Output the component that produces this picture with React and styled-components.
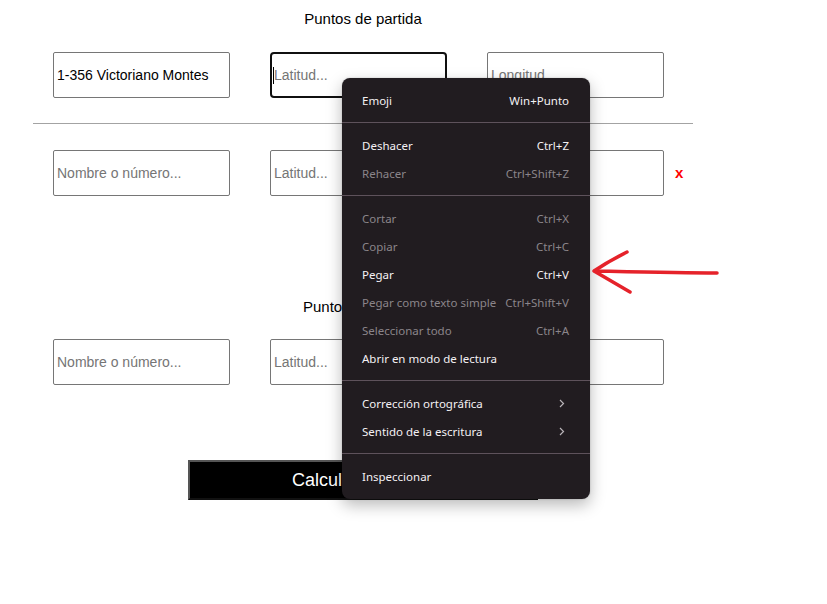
import React from "react";
import styled, { createGlobalStyle } from "styled-components";

const GlobalStyle = createGlobalStyle`
  html, body {
    margin: 0;
    padding: 0;
    background: #ffffff;
  }
  body {
    font-family: "Liberation Sans", Arial, sans-serif;
    color: #000;
  }
`;

const menuItems = [
  { label: "Emoji", shortcut: "Win+Punto" },
  { sep: true },
  { label: "Deshacer", shortcut: "Ctrl+Z" },
  { label: "Rehacer", shortcut: "Ctrl+Shift+Z", disabled: true },
  { sep: true },
  { label: "Cortar", shortcut: "Ctrl+X", disabled: true },
  { label: "Copiar", shortcut: "Ctrl+C", disabled: true },
  { label: "Pegar", shortcut: "Ctrl+V" },
  { label: "Pegar como texto simple", shortcut: "Ctrl+Shift+V", disabled: true },
  { label: "Seleccionar todo", shortcut: "Ctrl+A", disabled: true },
  { label: "Abrir en modo de lectura" },
  { sep: true },
  { label: "Corrección ortográfica", submenu: true },
  { label: "Sentido de la escritura", submenu: true },
  { sep: true },
  { label: "Inspeccionar" },
];

const App = () => {
  return (
    <Screen>
      <GlobalStyle />
      <Page>
        <Title>Puntos de partida</Title>
        <Row>
          <Field defaultValue="1-356 Victoriano Montes" placeholder="Nombre o número..." />
          <FieldWrap>
            <Field $focused placeholder="Latitud..." />
            <Caret />
          </FieldWrap>
          <Field placeholder="Longitud..." />
        </Row>
        <Divider />
        <Row $gap={26}>
          <Field placeholder="Nombre o número..." />
          <Field placeholder="Latitud..." />
          <Field placeholder="Longitud..." />
          <Remove>x</Remove>
        </Row>
        <Title $top={102}>Puntos de llegada</Title>
        <Row $gap={23}>
          <Field placeholder="Nombre o número..." />
          <Field placeholder="Latitud..." />
          <Field placeholder="Longitud..." />
        </Row>
        <Calculate>Calcular distancia</Calculate>
      </Page>

      <Menu>
        {menuItems.map((item, i) =>
          item.sep ? (
            <MenuSeparator key={i} />
          ) : (
            <MenuItem key={i} $disabled={item.disabled}>
              <span>{item.label}</span>
              {item.shortcut && <Shortcut>{item.shortcut}</Shortcut>}
              {item.submenu && (
                <svg width="6" height="9" viewBox="0 0 6 9">
                  <polyline
                    points="1,1 4.5,4.5 1,8"
                    fill="none"
                    stroke="#b9b4b8"
                    strokeWidth="1.2"
                  />
                </svg>
              )}
            </MenuItem>
          )
        )}
      </Menu>

      <Arrow width="140" height="60" viewBox="586 242 140 60">
        <path
          d="M595 271 C 640 272, 680 273, 717 273"
          fill="none"
          stroke="#e5222a"
          strokeWidth="3.5"
          strokeLinecap="round"
        />
        <path
          d="M627 252 C 615 258, 603 265, 594 271 C 606 278, 618 285, 630 292"
          fill="none"
          stroke="#e5222a"
          strokeWidth="3.5"
          strokeLinecap="round"
          strokeLinejoin="round"
        />
      </Arrow>
    </Screen>
  );
};

//Styled Components
const Screen = styled.div`
  position: relative;
  display: flow-root;
  width: 827px;
  min-height: 604px;
`;

const Page = styled.div`
  width: 660px;
  margin-left: 33px;
`;

const Title = styled.h3`
  margin: ${(p) => p.$top || 10}px 0 0;
  font-size: 15px;
  line-height: 18px;
  font-weight: normal;
  text-align: center;
`;

const Row = styled.div`
  display: flex;
  align-items: center;
  gap: 40px;
  padding-left: 20px;
  margin-top: ${(p) => p.$gap || 24}px;
  height: 46px;
`;

const FieldWrap = styled.div`
  position: relative;
  display: flex;
`;

const Field = styled.input`
  box-sizing: border-box;
  width: 177px;
  height: 46px;
  margin: 0;
  padding: 0 ${(p) => (p.$focused ? 2 : 3)}px;
  border: ${(p) => (p.$focused ? "2px solid #101010" : "1px solid #767676")};
  border-radius: ${(p) => (p.$focused ? 4 : 2)}px;
  font-family: "Liberation Sans", Arial, sans-serif;
  font-size: 14px;
  color: #000;
  background: #fff;
  outline: none;

  &::placeholder {
    color: #757575;
  }
`;

const Caret = styled.span`
  position: absolute;
  left: 3px;
  top: 15px;
  width: 1px;
  height: 17px;
  background: #000;
`;

const Divider = styled.div`
  margin-top: 25px;
  height: 1px;
  background: #a3a3a3;
`;

const Remove = styled.span`
  margin-left: -29px;
  margin-top: -2px;
  color: #ff0000;
  font-size: 15px;
  font-weight: bold;
  line-height: 1;
`;

const Calculate = styled.button`
  display: block;
  box-sizing: border-box;
  width: 350px;
  height: 40px;
  margin: 75px auto 0;
  padding: 0;
  background: #000;
  color: #fff;
  border-style: solid;
  border-width: 2px;
  border-color: #555 #111 #111 #555;
  font-family: "Liberation Sans", Arial, sans-serif;
  font-size: 18px;
`;

const Menu = styled.div`
  position: absolute;
  left: 342px;
  top: 78px;
  width: 248px;
  box-sizing: border-box;
  padding: 8px 0 9px;
  background: #211c20;
  border-radius: 8px;
  box-shadow: 0 6px 16px rgba(0, 0, 0, 0.28), 0 0 2px rgba(0, 0, 0, 0.2);
  font-family: "Noto Sans", "Open Sans", sans-serif;
  font-size: 11.5px;
`;

const MenuItem = styled.div`
  display: flex;
  align-items: center;
  justify-content: space-between;
  height: 28px;
  padding: 0 21px 0 20px;
  color: ${(p) => (p.$disabled ? "#8b858a" : "#f4f1f4")};

  svg {
    margin-right: 4px;
  }
`;

const Shortcut = styled.span`
  white-space: nowrap;
`;

const MenuSeparator = styled.div`
  height: 1px;
  margin: 8px 0;
  background: #5e525b;
`;

const Arrow = styled.svg`
  position: absolute;
  left: 586px;
  top: 242px;
`;

export default App;
